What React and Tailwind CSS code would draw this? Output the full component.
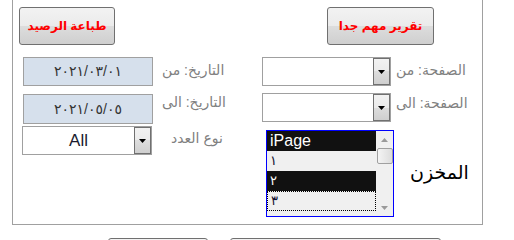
const FONT = { fontFamily: '"Liberation Sans", "DejaVu Sans", sans-serif' };

function GelButton({ children, className = '' }) {
  return (
    <div
      className={`flex items-center justify-center rounded-[3px] border border-[#707070] bg-[linear-gradient(#f2f2f2_0%,#ebebeb_50%,#dddddd_50%,#cfcfcf_100%)] ${className}`}
    >
      <span className="text-[12px] font-bold text-[#ff0000]" dir="rtl">
        {children}
      </span>
    </div>
  );
}

function DropArrow() {
  return (
    <div className="flex h-full w-[17px] items-center justify-center border border-[#707070] bg-[linear-gradient(#f2f2f2_0%,#ebebeb_50%,#dddddd_50%,#cfcfcf_100%)]">
      <svg width="7" height="4" viewBox="0 0 7 4">
        <path d="M0 0h7L3.5 4z" fill="#000" />
      </svg>
    </div>
  );
}

function Select({ value, className = '' }) {
  return (
    <div className={`flex h-[29px] border border-[#a0a0a0] bg-white ${className}`}>
      <div className="flex flex-1 items-center justify-center text-[17px] text-[#1a1a2e]">{value}</div>
      <DropArrow />
    </div>
  );
}

function DateBox({ value, className = '' }) {
  return (
    <div
      className={`flex items-center justify-center border border-[#a0a0a0] bg-[#d6e0ec] text-[14px] tracking-[1px] text-[#333]  ${className}`}
      dir="rtl"
    >
      {value}
    </div>
  );
}

function Label({ children, className = '' }) {
  return (
    <div className={`text-[14px] leading-none text-[#808080] ${className}`} dir="rtl">
      {children}
    </div>
  );
}

const ROWS = [
  { text: 'iPage', dark: true, big: true },
  { text: '١', dark: false },
  { text: '٢', dark: true },
  { text: '٣', dark: false, focus: true },
];

function ListBox() {
  return (
    <div className="ml-[13px] flex h-[87px] w-[128px] border border-[#0000ff] bg-[#f0f0f0]">
      <div className="flex flex-1 flex-col">
        {ROWS.map((r) => (
          <div
            key={r.text}
            className={`flex h-[20px] items-center px-[3px] ${r.dark ? 'bg-[#111111] text-white' : 'bg-[#f0f0f0] text-[#101030]'} ${r.big ? 'text-[16px]' : 'text-[13px]'} ${r.focus ? 'border border-dotted border-black' : ''}`}
          >
            {r.text}
          </div>
        ))}
      </div>
      <div className="flex w-[17px] flex-col items-center bg-[#f0f0f0]">
        <div className="flex h-[17px] w-full items-center justify-center">
          <svg width="7" height="4" viewBox="0 0 7 4">
            <path d="M3.5 0L7 4H0z" fill="#9a9a9a" />
          </svg>
        </div>
        <div className="h-[16px] w-[16px] rounded-[2px] border border-[#a0a0a0] bg-[linear-gradient(90deg,#f4f4f4,#dcdcdc)]" />
        <div className="flex-1" />
        <div className="flex h-[17px] w-full items-center justify-center">
          <svg width="7" height="4" viewBox="0 0 7 4">
            <path d="M0 0h7L3.5 4z" fill="#9a9a9a" />
          </svg>
        </div>
      </div>
    </div>
  );
}

export default function App() {
  return (
    <div className="h-[240px] w-[514px] overflow-hidden bg-white" style={FONT}>
      <div className="ml-[12px] flex h-[225px] w-[471px] border-x border-b border-[#a0a0a0]">
        {/* left column */}
        <div className="flex w-[240px] flex-col">
          <GelButton className="ml-[6px] mt-[7px] h-[38px] w-[96px]">طباعة الرصيد</GelButton>
          <div className="mt-[12px] flex items-start">
            <DateBox value="٢٠٢١/٠٣/٠١" className="ml-[10px] h-[29px] w-[130px]" />
            <Label className="ml-[9px] mt-[6px]">التاريخ: من</Label>
          </div>
          <div className="mt-[8px] flex items-start">
            <DateBox value="٢٠٢١/٠٥/٠٥" className="ml-[10px] h-[30px] w-[130px]" />
            <Label className="ml-[9px] mt-[1px]">التاريخ: الى</Label>
          </div>
          <div className="mt-[2px] flex items-start">
            <Select value="All" className="ml-[9px] w-[130px]" />
            <Label className="ml-[19px] mt-[5px]">نوع العدد</Label>
          </div>
        </div>
        {/* right column */}
        <div className="flex flex-1 flex-col">
          <GelButton className="ml-[74px] mt-[7px] h-[38px] w-[107px]">تقرير مهم جدا</GelButton>
          <div className="mt-[12px] flex items-start">
            <Select value="" className="ml-[9px] w-[129px]" />
            <Label className="ml-[5px] mt-[6px]">الصفحة: من</Label>
          </div>
          <div className="mt-[7px] flex items-start">
            <Select value="" className="ml-[9px] w-[129px]" />
            <Label className="ml-[5px] mt-[3px]">الصفحة: الى</Label>
          </div>
          <div className="mt-[8px] flex items-center">
            <ListBox />
            <div className="ml-[16px] text-[19px] text-black" dir="rtl">المخزن</div>
          </div>
        </div>
      </div>
      <div className="mt-[13px] flex">
        <div className="ml-[108px] h-[30px] w-[100px] rounded-[3px] border border-[#707070] bg-[#f2f2f2]" />
        <div className="ml-[22px] h-[30px] w-[211px] rounded-[3px] border border-[#707070] bg-[#f2f2f2]" />
      </div>
    </div>
  );
}
